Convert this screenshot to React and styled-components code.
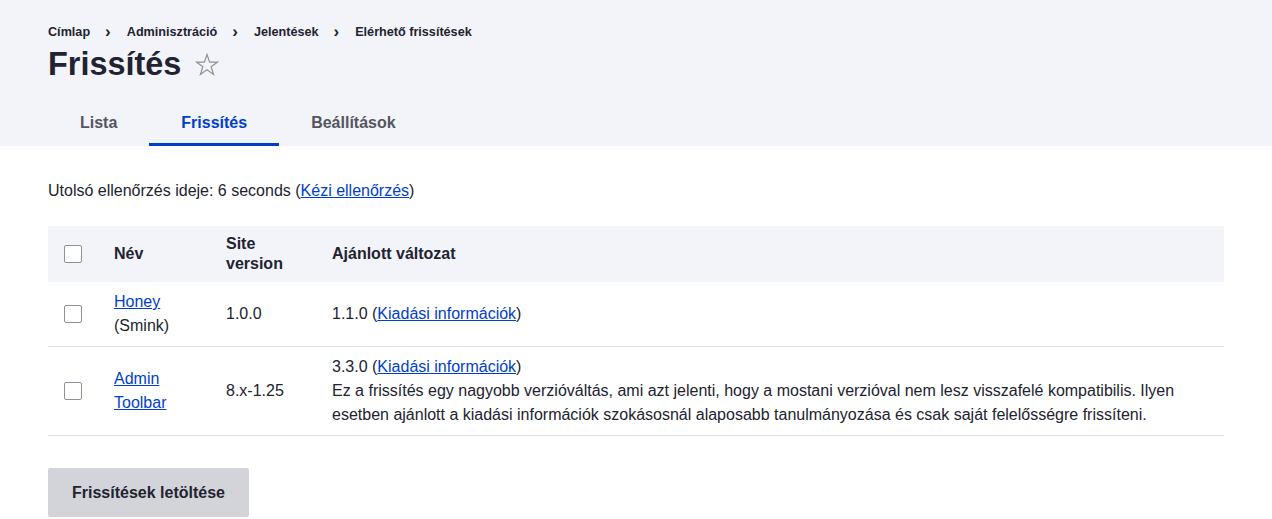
import React from "react";
import styled, { createGlobalStyle } from "styled-components";

const Global = createGlobalStyle`
  html, body { margin: 0; padding: 0; background: #fff; }
  body {
    font-family: "Liberation Sans", Arial, sans-serif;
    color: #222330;
    font-size: 16px;
    line-height: 1.5;
  }
  * { box-sizing: border-box; }
`;

const Header = styled.header`
  background: #f3f4f9;
  padding: 21px 48px 0;
`;

const Breadcrumb = styled.ol`
  display: flex;
  list-style: none;
  margin: 0;
  padding: 0;
  font-size: 12.64px;
  font-weight: 700;
  line-height: 23px;
  color: #222330;
`;

const Crumb = styled.li`
  display: flex;
  align-items: center;
  &:not(:last-child)::after {
    content: "›";
    font-size: 17px;
    font-weight: 700;
    margin: 0 16px 0 15px;
    position: relative;
    top: -1px;
  }
`;

const TitleRow = styled.div`
  display: flex;
  align-items: center;
  gap: 13px;
`;

const Title = styled.h1`
  margin: 0;
  font-size: 32.43px;
  line-height: 40px;
  font-weight: 700;
  color: #222330;
`;

const StarBtn = styled.span`
  display: inline-flex;
  width: 26px;
  height: 26px;
  align-items: center;
  justify-content: center;
  margin-top: 2px;
`;

const Tabs = styled.nav`
  display: flex;
  margin-top: 18px;
`;

const Tab = styled.a`
  display: block;
  padding: 0 32px;
  height: 44px;
  line-height: 42px;
  font-size: 16px;
  font-weight: 700;
  text-decoration: none;
  color: ${(p) => (p.$active ? "#003ecc" : "#545560")};
  border-bottom: 3px solid ${(p) => (p.$active ? "#003ecc" : "transparent")};
`;

const Main = styled.main`
  padding: 0 48px;
`;

const Status = styled.p`
  margin: 33px 0 23px;
  line-height: 24px;
`;

const Link = styled.a`
  color: #003ecc;
  text-decoration: underline;
`;

const Table = styled.table`
  width: 100%;
  border-collapse: collapse;
`;

const HeadRow = styled.tr`
  background: #f3f4f9;
  height: 56px;
`;

const Th = styled.th`
  text-align: left;
  font-weight: 700;
  padding: 8px 16px;
  line-height: 20px;
  vertical-align: middle;
  width: ${(p) => p.$w || "auto"};
`;

const Row = styled.tr`
  border-bottom: 1px solid #dedfe4;
`;

const Td = styled.td`
  padding: 8px 16px;
  line-height: 24px;
  vertical-align: middle;
`;

const Box = styled.span`
  display: block;
  width: 18px;
  height: 18px;
  border: 1px solid #8e929c;
  border-radius: 2px;
  background: #fff;
`;

const Actions = styled.div`
  margin-top: 32px;
`;

const Button = styled.button`
  font-family: inherit;
  font-size: 16px;
  font-weight: 700;
  color: #222330;
  background: #d3d4d9;
  border: none;
  border-radius: 2px;
  padding: 0 24px;
  height: 49px;
  line-height: 24px;
`;

export default function App() {
  return (
    <>
      <Global />
      <Header>
        <Breadcrumb>
          <Crumb>Címlap</Crumb>
          <Crumb>Adminisztráció</Crumb>
          <Crumb>Jelentések</Crumb>
          <Crumb>Elérhető frissítések</Crumb>
        </Breadcrumb>
        <TitleRow>
          <Title>Frissítés</Title>
          <StarBtn>
            <svg width="24" height="24" viewBox="0 0 24 24">
              <path
                d="M12 1.5l2.6 7.6h8l-6.5 4.7 2.5 7.7L12 16.8l-6.6 4.7 2.5-7.7-6.5-4.7h8z"
                fill="none"
                stroke="#8e929c"
                strokeWidth="1.2"
              />
            </svg>
          </StarBtn>
        </TitleRow>
        <Tabs>
          <Tab>Lista</Tab>
          <Tab $active>Frissítés</Tab>
          <Tab>Beállítások</Tab>
        </Tabs>
      </Header>
      <Main>
        <Status>
          Utolsó ellenőrzés ideje: 6 seconds (<Link href="#">Kézi ellenőrzés</Link>)
        </Status>
        <Table>
          <thead>
            <HeadRow>
              <Th $w="50px"><Box /></Th>
              <Th $w="112px">Név</Th>
              <Th $w="106px">Site<br />version</Th>
              <Th>Ajánlott változat</Th>
            </HeadRow>
          </thead>
          <tbody>
            <Row>
              <Td><Box /></Td>
              <Td><Link href="#">Honey</Link><br />(Smink)</Td>
              <Td>1.0.0</Td>
              <Td>1.1.0 (<Link href="#">Kiadási információk</Link>)</Td>
            </Row>
            <Row>
              <Td><Box /></Td>
              <Td><Link href="#">Admin Toolbar</Link></Td>
              <Td>8.x-1.25</Td>
              <Td>
                3.3.0 (<Link href="#">Kiadási információk</Link>)
                <br />
                Ez a frissítés egy nagyobb verzióváltás, ami azt jelenti, hogy a mostani verzióval nem lesz visszafelé kompatibilis. Ilyen esetben ajánlott a kiadási információk szokásosnál alaposabb tanulmányozása és csak saját felelősségre frissíteni.
              </Td>
            </Row>
          </tbody>
        </Table>
        <Actions>
          <Button>Frissítések letöltése</Button>
        </Actions>
      </Main>
    </>
  );
}
